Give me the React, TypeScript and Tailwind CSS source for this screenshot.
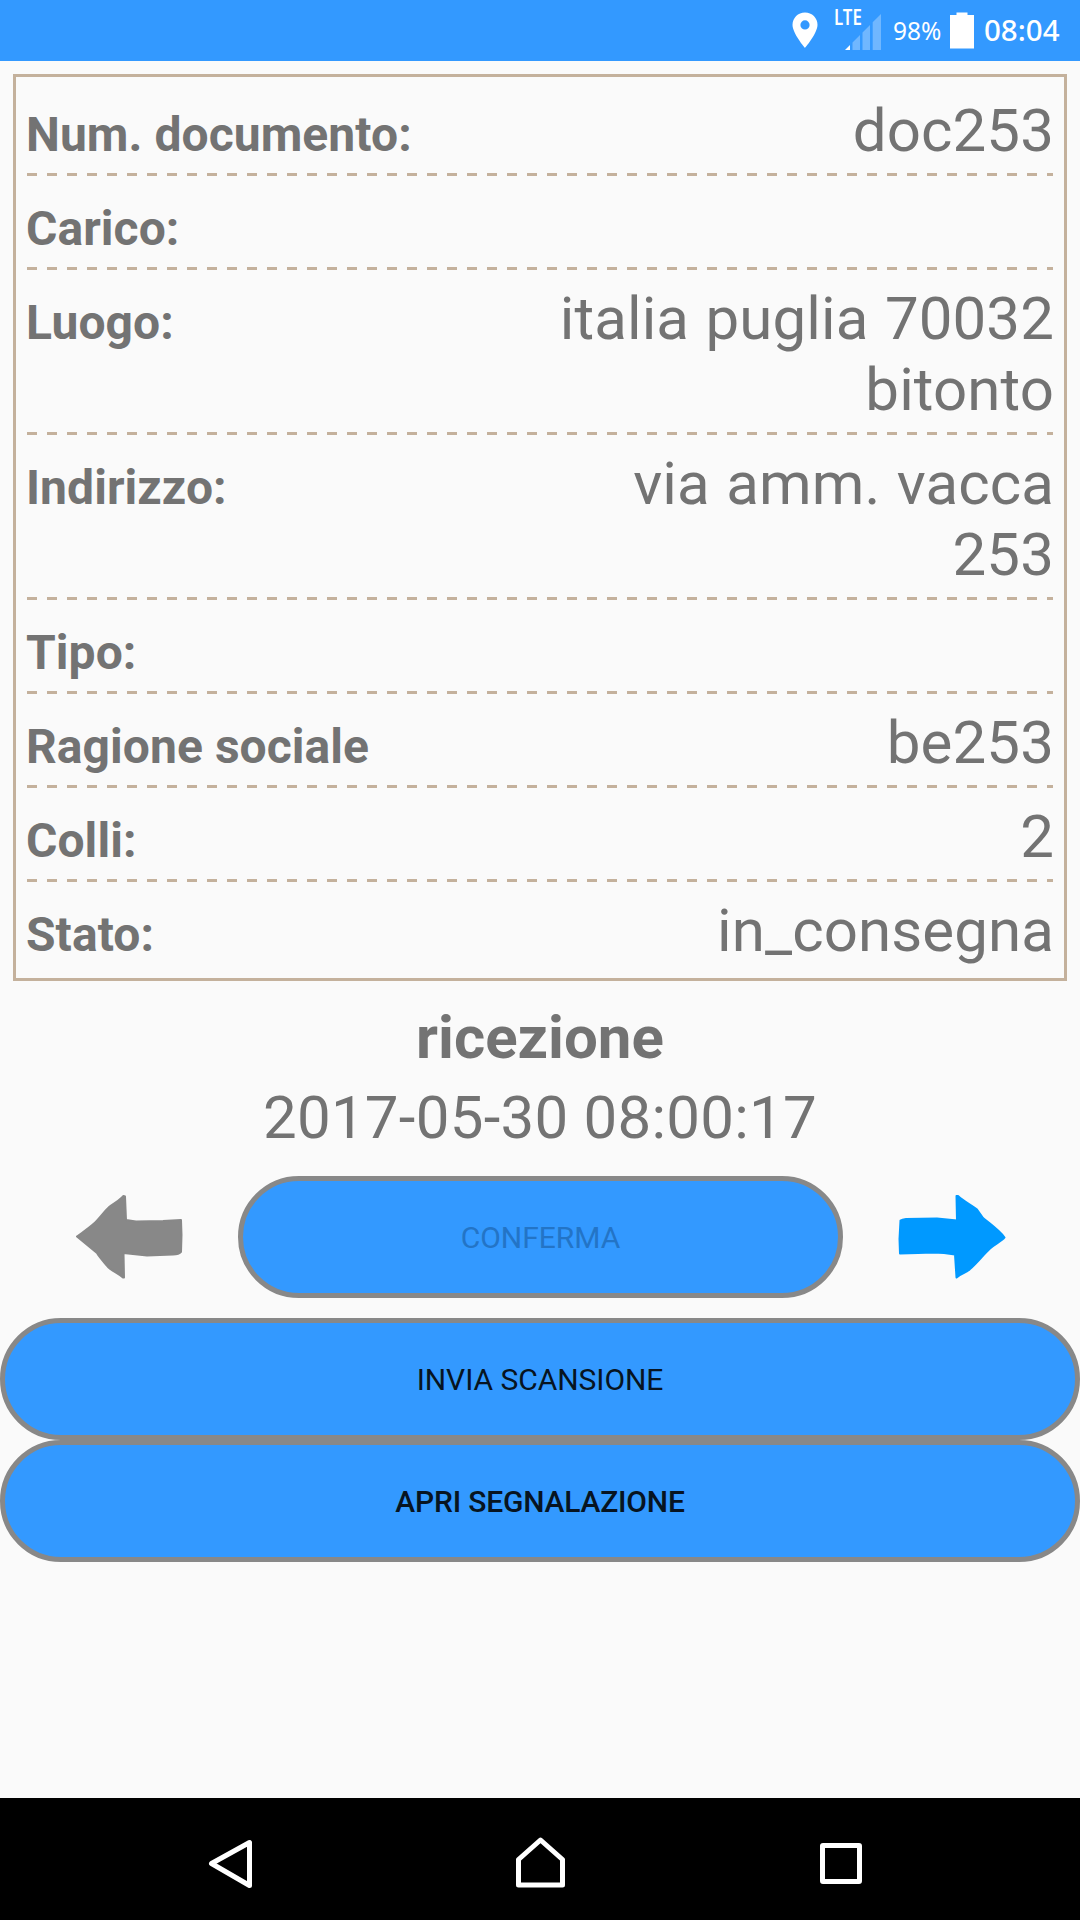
import { clsx } from 'clsx'

const rows = [
  { label: 'Num. documento:', value: 'doc253' },
  { label: 'Carico:', value: '' },
  { label: 'Luogo:', value: 'italia puglia 70032 bitonto' },
  { label: 'Indirizzo:', value: 'via amm. vacca 253' },
  { label: 'Tipo:', value: '' },
  { label: 'Ragione sociale', value: 'be253' },
  { label: 'Colli:', value: '2' },
  { label: 'Stato:', value: 'in_consegna' },
]

function StatusBar() {
  return (
    <header className="flex h-[61px] shrink-0 items-start justify-end bg-[#3399ff] pr-5 font-['Noto_Sans',sans-serif] text-white">
      <svg className="mt-3 h-9 w-[26px]" viewBox="0 0 26 36" fill="currentColor">
        <path
          fillRule="evenodd"
          d="M13 0.5C6 0.5 0.5 6 0.5 12.8C0.5 21.5 13 36 13 36S25.5 21.5 25.5 12.8C25.5 6 20 0.5 13 0.5ZM13 8.3a4.6 4.6 0 1 1 0 9.2a4.6 4.6 0 0 1 0-9.2Z"
        />
      </svg>

      <div className="relative ml-[27px] mt-3.5 h-9 w-9">
        <svg className="h-9 w-9" viewBox="0 0 36 36" fill="currentColor">
          <path d="M0 36L5 31V36Z" />
          <path opacity="0.3" d="M7.5 28.5L15 21V36H7.5ZM17.5 18.5L25 11V36H17.5ZM27.7 8.3L36 0V36H27.7Z" />
        </svg>
        <span className="absolute -left-[11px] -top-[7px] origin-left scale-x-[0.8] text-[21px] font-semibold leading-[21px]">
          LTE
        </span>
      </div>

      <span className="ml-3 mt-3 w-[50px] origin-left scale-x-[0.94] whitespace-nowrap text-[26px] leading-9">98%</span>

      <svg className="ml-[7px] mt-3 h-[37px] w-6" viewBox="0 0 24 37" fill="currentColor">
        <path d="M6.5 0.5H17.5V3H24V36.5H0V3H6.5Z" />
      </svg>

      <span className="ml-2.5 mt-3 w-[76px] whitespace-nowrap text-[29.5px] font-medium leading-9">
        08:04
      </span>
    </header>
  )
}

function ArrowLeft() {
  return (
    <svg className="h-[86px] w-[108px]" viewBox="0 0 108 86" fill="#888888" stroke="#888888" strokeWidth="2" strokeLinejoin="round">
      <path d="M2 42.5C8 38 14 34 19 29.500C25 24 30 16 36 11.500C41 8.500 45 6 48.500 2L50 2.500L51 26L61 27.500L88 27L106 26L106.500 41L106 58Q104 60.500 98 60.500L72 61.500L48.500 59L49 83.500H48C43 79 37 77 33 73C29 68 25 64 22 59Z" />
    </svg>
  )
}

function ArrowRight() {
  return (
    <svg className="h-[86px] w-[108px]" viewBox="0 0 108 86" fill="#0099ff" stroke="#0099ff" strokeWidth="2" strokeLinejoin="round">
      <path d="M106.500 43.500C104 47 97 50 92 54.500C85 61 79 69 72 75C68 79 63 79 58.500 83.500L57 60.500Q46 58.500 35 58.500L20 59L2 59.500L1.500 45L2.500 26.500Q4 25.500 8 25L39 24.500L59 26.500L58.500 2H60C66 8 74 11 79 15.500L85 24C92 30 101 36 106.500 43.500Z" />
    </svg>
  )
}

function PillButton({ children, className }: { children: string; className?: string }) {
  return (
    <button
      className={clsx(
        'h-[122px] rounded-[61px] border-[5px] border-[#888888] bg-[#3399ff] text-[30px] uppercase',
        className,
      )}
    >
      {children}
    </button>
  )
}

function NavigationBar() {
  return (
    <nav className="flex h-[122px] shrink-0 items-start bg-black pl-[208px] text-white">
      <svg className="mt-[41px] h-[50px] w-[46px]" viewBox="0 0 46 50" fill="none" stroke="currentColor" strokeWidth="5" strokeLinejoin="round">
        <path d="M3.500 24.500L41.500 3.500V46.500Z" />
      </svg>
      <svg className="ml-[261px] mt-[38px] h-[54px] w-[51px]" viewBox="0 0 51 54" fill="none" stroke="currentColor" strokeWidth="5" strokeLinejoin="round">
        <path d="M3.500 49V23.500L25.500 4L47.500 23.500V49Z" />
      </svg>
      <div className="ml-[254px] mt-[45px] h-[41px] w-[42px] rounded-[3px] border-[5px] border-white" />
    </nav>
  )
}

export default function App() {
  return (
    <div className="flex h-[1920px] w-[1080px] flex-col overflow-hidden bg-[#fafafa] font-[Roboto,sans-serif] text-[#737373]">
      <StatusBar />

      <main className="flex grow flex-col">
        <dl className="mx-[13px] mt-[13px] border-[3px] border-[#c4b19c] px-[11px] py-[5px]">
          {rows.map((row, i) => (
            <div key={row.label}>
              <div className="grid grid-cols-2 items-baseline pb-[7px] pt-[13px]">
                <dt className="-ml-px whitespace-nowrap text-[48px] font-bold leading-[50px] tracking-[0.06px]">
                  {row.label}
                </dt>
                <dd className="-mr-px text-right text-[60px] leading-[71px] tracking-[0.1px] [word-spacing:1.5px]">
                  {row.value || '\u00a0'}
                </dd>
              </div>
              {i < rows.length - 1 && (
                <div className="h-[3px] bg-[repeating-linear-gradient(90deg,#c4b19c_0_10px,transparent_10px_20px)]" />
              )}
            </div>
          ))}
        </dl>

        <h1 className="mt-[17px] text-center text-[60px] font-bold leading-[80px]">ricezione</h1>
        <p className="text-center text-[60px] leading-[80px] tracking-[0.26px]">2017-05-30 08:00:17</p>

        <div className="mt-[18px] flex items-center">
          <div className="flex w-[238px] justify-center pl-5">
            <ArrowLeft />
          </div>
          <PillButton className="w-[605px] text-[#2374c6]">Conferma</PillButton>
          <div className="flex w-[237px] justify-center pr-5">
            <ArrowRight />
          </div>
        </div>

        <PillButton className="mt-5 w-full tracking-[-0.05px] text-[#071421]">Invia scansione</PillButton>
        <PillButton className="w-full font-medium tracking-[-0.2px] text-[#071421]">Apri segnalazione</PillButton>
      </main>

      <NavigationBar />
    </div>
  )
}
